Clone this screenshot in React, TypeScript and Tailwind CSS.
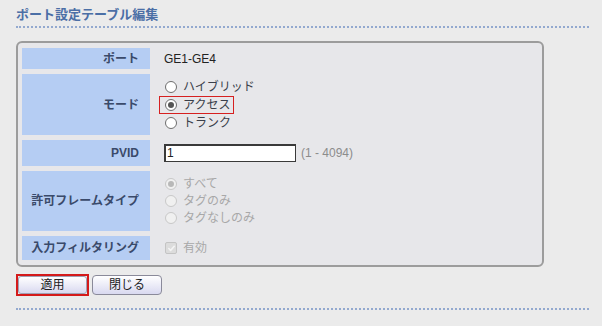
import React from 'react'

const FONT = '"Liberation Sans", "Noto Sans CJK JP", sans-serif'

function Radio({ checked, disabled }: { checked?: boolean; disabled?: boolean }) {
  return (
    <span
      className={
        'relative inline-flex w-[12px] h-[12px] rounded-full border items-center justify-center shrink-0 ' +
        (disabled ? 'border-[#c8c8c8] bg-[#f0f0f0]' : 'border-[#6e6e6e] bg-white')
      }
    >
      {checked && (
        <span className={'w-[6px] h-[6px] rounded-full ' + (disabled ? 'bg-[#b8b8b8]' : 'bg-[#555]')} />
      )}
    </span>
  )
}

function Label({ children, h }: { children: React.ReactNode; h: string }) {
  return (
    <div className={'w-[128px] bg-[#b5cdf3] flex items-center justify-end pr-[11px] text-[12px] font-bold text-[#3a4a6a] ' + h}>
      {children}
    </div>
  )
}

export default function App() {
  return (
    <div className="w-[602px] h-[326px] bg-[#ebebeb] pl-[16px] pr-[13px] pt-[7px]" style={{ fontFamily: FONT }}>
      <div className="text-[13px] font-bold text-[#4b6fa6] leading-[16px] pb-[3px] border-b-2 border-dotted border-[#93a9cf]">
        ポート設定テーブル編集
      </div>

      <div className="mt-[13px] w-[528px] border-2 border-[#9c9c9c] rounded-[6px] bg-[#e7e7ea] pt-[5px] pb-[5px] px-[4px] flex flex-col gap-[5px]">
        <div className="flex">
          <Label h="h-[21px]">ポート</Label>
          <div className="pl-[14px] flex items-center text-[12px] text-[#222]">GE1-GE4</div>
        </div>

        <div className="flex">
          <Label h="h-[61px]">モード</Label>
          <div className="pl-[9px] flex flex-col justify-center text-[12px] text-[#3a3f4a] leading-[18px]">
            <div className="flex items-center gap-[6px] pl-[6px]">
              <Radio /> ハイブリッド
            </div>
            <div className="flex items-center gap-[6px] pl-[5px] border border-[#d62020] w-[75px] h-[18px]">
              <Radio checked /> アクセス
            </div>
            <div className="flex items-center gap-[6px] pl-[6px]">
              <Radio /> トランク
            </div>
          </div>
        </div>

        <div className="flex">
          <Label h="h-[26px]">PVID</Label>
          <div className="pl-[14px] flex items-center gap-[5px]">
            <div className="w-[132px] h-[18px] bg-white border border-[#3a3a3a] border-t-2 border-l-2 text-[12px] leading-[14px] pl-[1px] text-[#222]">
              1
            </div>
            <span className="text-[12px] text-[#8c8c8c]">(1 - 4094)</span>
          </div>
        </div>

        <div className="flex">
          <Label h="h-[60px]">許可フレームタイプ</Label>
          <div className="pl-[15px] flex flex-col justify-center text-[12px] text-[#a8a8a8] leading-[17px]">
            <div className="flex items-center gap-[6px]">
              <Radio checked disabled /> すべて
            </div>
            <div className="flex items-center gap-[6px]">
              <Radio disabled /> タグのみ
            </div>
            <div className="flex items-center gap-[6px]">
              <Radio disabled /> タグなしのみ
            </div>
          </div>
        </div>

        <div className="flex">
          <Label h="h-[24px]">入力フィルタリング</Label>
          <div className="pl-[15px] flex items-center gap-[6px] text-[12px] text-[#a8a8a8]">
            <span className="w-[12px] h-[12px] rounded-[2px] border border-[#c4c4c4] bg-[#dcdcdc] flex items-center justify-center">
              <svg viewBox="0 0 10 10" className="w-[9px] h-[9px]" fill="none" stroke="#f4f4f4" strokeWidth={1.8}>
                <path d="M2 5l2 2.2L8 2.5" strokeLinecap="round" strokeLinejoin="round" />
              </svg>
            </span>
            有効
          </div>
        </div>
      </div>

      <div className="mt-[7px] flex items-center gap-[3px]">
        <div className="flex border-2 border-[#d41a1a]">
          <button className="w-[69px] h-[18px] rounded-[3px] border border-[#a0a0b4] bg-gradient-to-b from-white to-[#d9d9f0] text-[12px] text-[#222] leading-none">
            適用
          </button>
        </div>
        <button className="w-[70px] h-[20px] rounded-[4px] border border-[#8a8a9a] bg-gradient-to-b from-white to-[#d9d9f0] text-[12px] text-[#222] leading-none">
          閉じる
        </button>
      </div>

      <div className="mt-[12px] border-b-2 border-dotted border-[#93a9cf]" />
    </div>
  )
}
